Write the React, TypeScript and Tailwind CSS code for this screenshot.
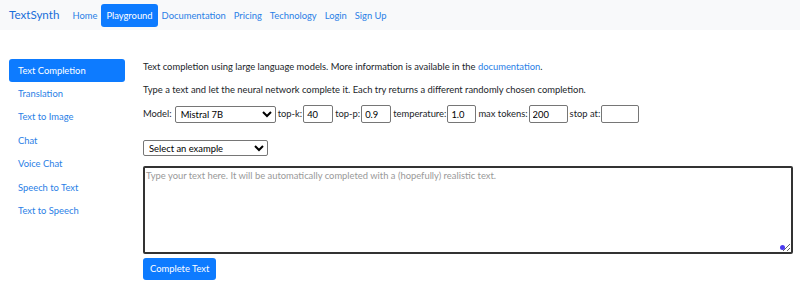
import React from 'react';

const navLinks = ['Home', 'Playground', 'Documentation', 'Pricing', 'Technology', 'Login', 'Sign Up'];
const sideLinks = ['Text Completion', 'Translation', 'Text to Image', 'Chat', 'Voice Chat', 'Speech to Text', 'Text to Speech'];

const Field: React.FC<{ label: string; value: string; width: string }> = ({ label, value, width }) => (
    <label className="flex items-center gap-[1px]">
        <span>{label}</span>
        <input
            defaultValue={value}
            className={`${width} h-[18px] border border-[#767676] rounded-[2px] bg-white px-[3px] text-[9.4px] text-black`}
        />
    </label>
);

const App: React.FC = () => {
    return (
        <div className="min-h-screen bg-white text-[9.4px] text-[#212529]" style={{ fontFamily: 'Lato, "Open Sans", sans-serif' }}>
            <nav className="h-[30px] bg-[#f8f9fa] flex items-center pl-[9px]">
                <a className="text-[11.6px] text-[#1a6fd9] mr-[9px]">TextSynth</a>
                <ul className="flex items-center">
                    {navLinks.map((l) => (
                        <li key={l}>
                            <a className={l === 'Playground'
                                ? 'block px-[5px] h-[23px] leading-[23px] rounded-[3px] bg-[#0d7bff] text-white'
                                : 'block px-[4px] h-[23px] leading-[23px] text-[#2a80e6]'}>
                                {l}
                            </a>
                        </li>
                    ))}
                </ul>
            </nav>

            <div className="flex pt-[29px]">
                <aside className="w-[116px] ml-[9px] flex flex-col">
                    {sideLinks.map((l) => (
                        <a key={l} className={l === 'Text Completion'
                            ? 'block h-[23px] leading-[23px] px-[9px] rounded-[3px] bg-[#0d7bff] text-white'
                            : 'block h-[23.4px] leading-[23.4px] px-[9px] text-[#2a80e6]'}>
                            {l}
                        </a>
                    ))}
                </aside>

                <main className="ml-[18px] flex-1 pr-[7px]">
                    <p className="mt-[1px] leading-[14px]">
                        Text completion using large language models. More information is available in the <a className="text-[#2a80e6]">documentation</a>.
                    </p>
                    <p className="mt-[9px] leading-[14px]">
                        Type a text and let the neural network complete it. Each try returns a different randomly chosen completion.
                    </p>
                    <div className="mt-[8px] flex items-center gap-[2px] h-[18px]">
                        <span className="mr-[1px]">Model:</span>
                        <select className="w-[101px] h-[17px] border border-[#767676] rounded-[2px] bg-white text-[9.4px] text-black pl-[1px]">
                            <option>Mistral 7B</option>
                        </select>
                        <Field label="top-k:" value="40" width="w-[30px]" />
                        <Field label="top-p:" value="0.9" width="w-[30px]" />
                        <Field label="temperature:" value="1.0" width="w-[29px]" />
                        <Field label="max tokens:" value="200" width="w-[39px]" />
                        <Field label="stop at:" value="" width="w-[38px]" />
                    </div>
                    <div className="mt-[17px]">
                        <select className="w-[125px] h-[16px] border border-[#767676] rounded-[2px] bg-white text-[9.4px] text-black pl-[1px] py-0">
                            <option>Select an example</option>
                        </select>
                    </div>
                    <div className="relative mt-[10px]">
                        <textarea
                            placeholder="Type your text here. It will be automatically completed with a (hopefully) realistic text."
                            className="block w-full h-[88px] border-2 border-[#333] rounded-[2px] bg-white px-[1px] py-[1px] text-[9.4px] text-black placeholder:text-[#999] resize"
                        />
                        <span className="absolute right-[8px] bottom-[4px] w-[5px] h-[5px] rounded-full bg-[#4b3bf0]" />
                    </div>
                    <button className="mt-[4px] h-[22px] px-[7px] rounded-[3px] bg-[#0d7bff] text-white text-[9.4px]">
                        Complete Text
                    </button>
                </main>
            </div>
        </div>
    );
};

export default App;
